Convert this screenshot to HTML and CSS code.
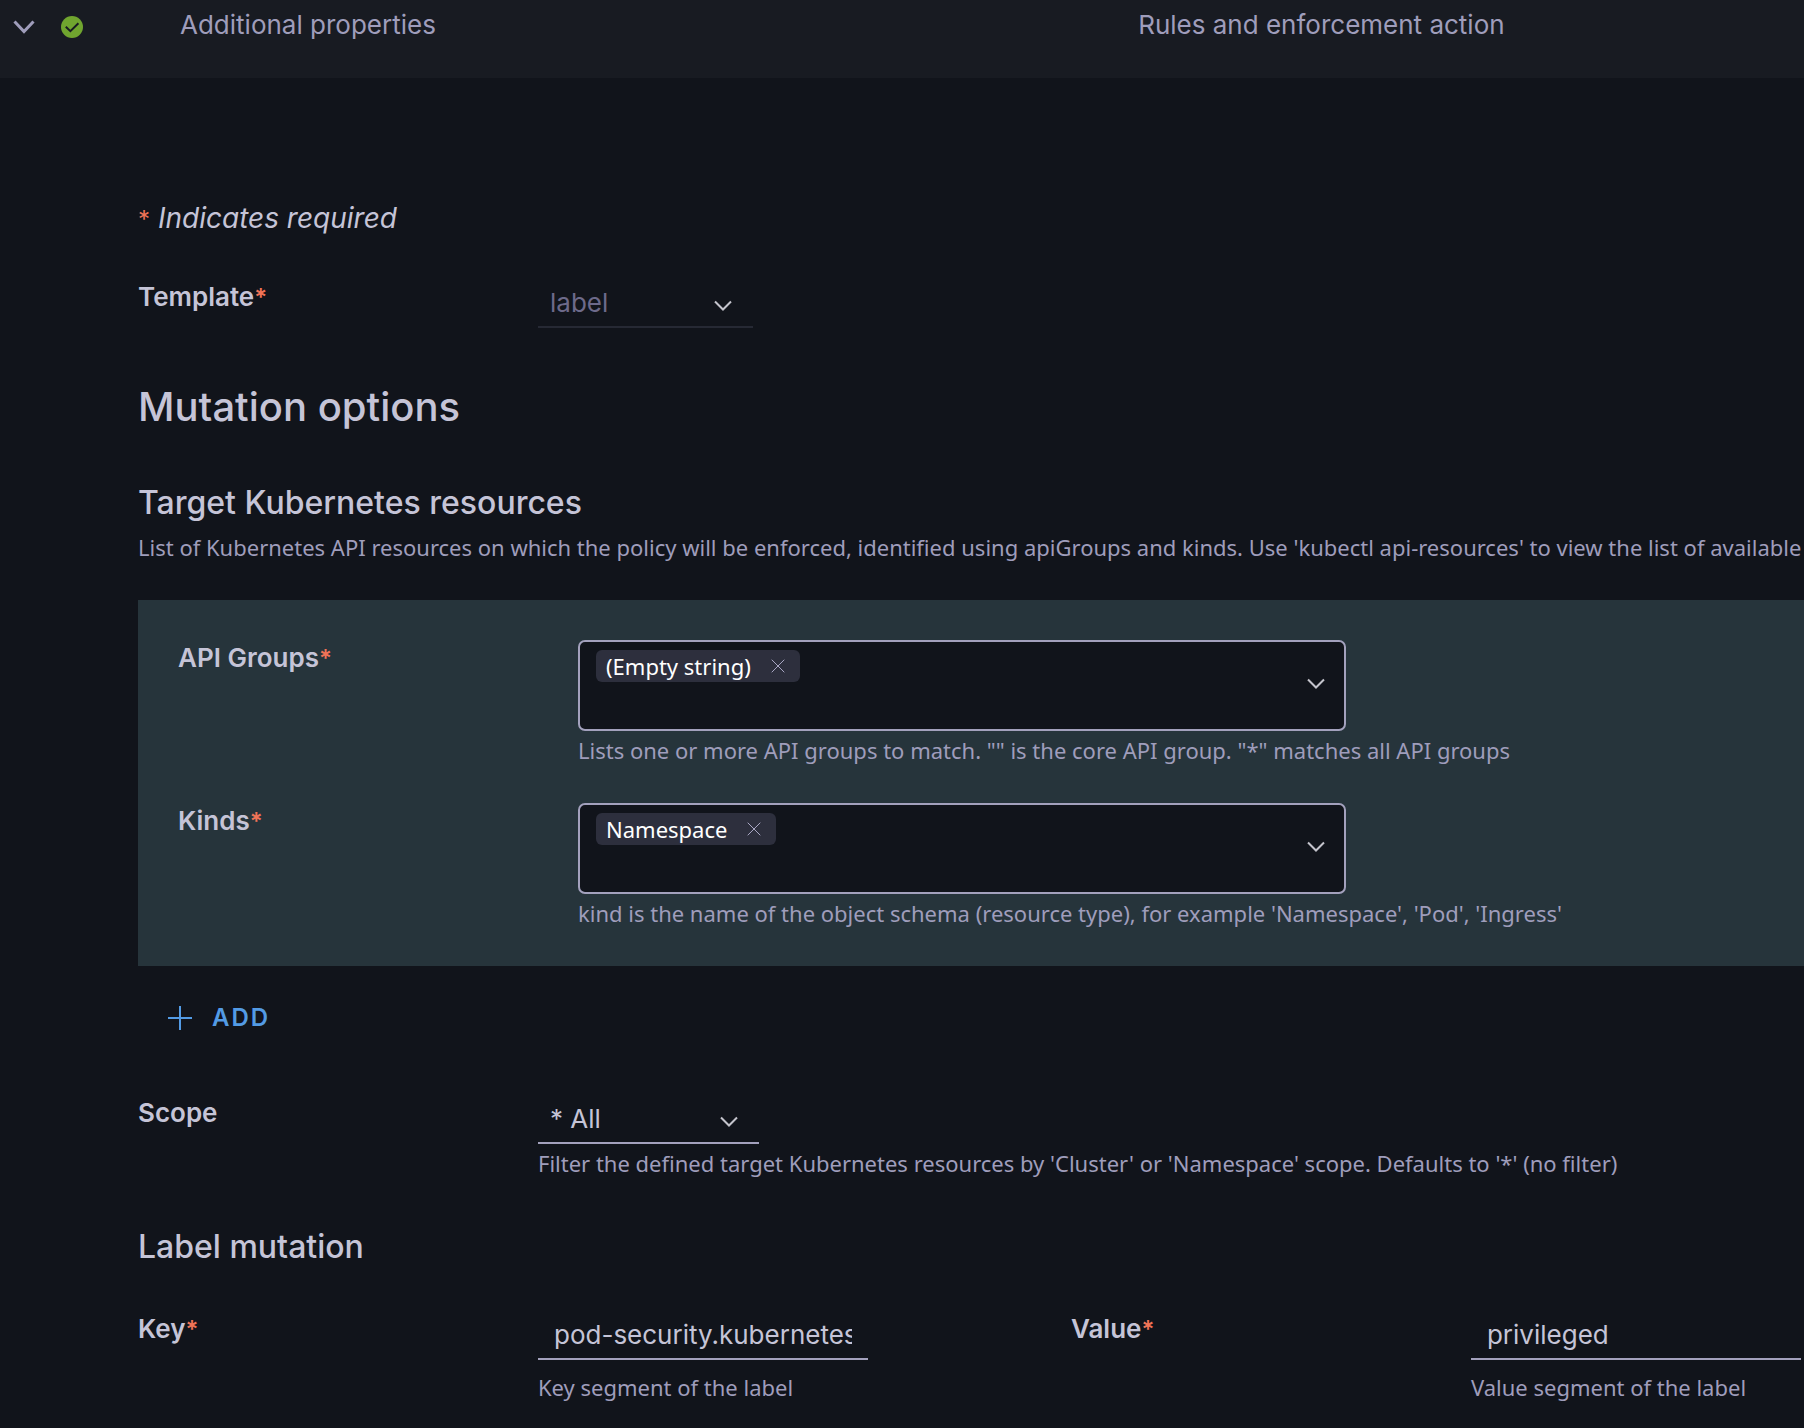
FILE: index.html
```html
<!DOCTYPE html>
<html lang="en">
<head>
<meta charset="utf-8">
<meta name="viewport" content="width=device-width, initial-scale=1">
<title>Additional properties</title>
<link rel="stylesheet" href="styles.css">
</head>
<body>
<header class="step-header">
  <div class="step-icons">
    <button class="icon-button" type="button" aria-label="Collapse step" aria-expanded="true">
      <svg class="step-chevron" viewBox="0 0 24 16" aria-hidden="true"><path d="M2.5 2.5 12 12.500 21.500 2.500"/></svg>
    </button>
    <svg class="step-status" viewBox="0 0 22 22" role="img" aria-label="Complete"><circle cx="11" cy="11" r="11"/><path d="M4.800 10.800 9.400 15.200 17.400 7.300"/></svg>
  </div>
  <div class="step-title">Additional properties</div>
  <div class="step-title">Rules and enforcement action</div>
</header>

<main class="step-content">
  <p class="required-note"><span class="required">*</span> <em>Indicates required</em></p>

  <div class="form-row template-row">
    <label class="field-label" for="template">Template<span class="required">*</span></label>
    <div class="field-control">
      <div class="select select-disabled">
        <select id="template" disabled><option>label</option></select>
        <svg class="chevron" viewBox="0 0 18 12" aria-hidden="true"><path d="M1 1.500 9 9.500 17 1.500"/></svg>
      </div>
    </div>
  </div>

  <h1 class="section-title">Mutation options</h1>

  <h2 class="sub-title target-title">Target Kubernetes resources</h2>
  <p class="description">List of Kubernetes API resources on which the policy will be enforced, identified using apiGroups and kinds. Use 'kubectl api-resources' to view the list of available</p>

  <section class="resource-panel">
    <div class="form-row">
      <label class="field-label" for="api-groups">API Groups<span class="required">*</span></label>
      <div class="panel-control">
        <div class="combobox">
          <span class="tag">(Empty string)
            <button class="icon-button" type="button" aria-label="Remove (Empty string)"><svg class="tag-close" viewBox="0 0 14 14" aria-hidden="true"><path d="M.7.7 13.300 13.300M13.300.7.7 13.300"/></svg></button>
          </span>
          <input class="combobox-input" id="api-groups" type="text">
          <button class="icon-button combobox-toggle" type="button" aria-label="Show API groups"><svg class="chevron" viewBox="0 0 18 12" aria-hidden="true"><path d="M1 1.500 9 9.500 17 1.500"/></svg></button>
        </div>
        <p class="hint">Lists one or more API groups to match. "" is the core API group. "*" matches all API groups</p>
      </div>
    </div>
    <div class="form-row">
      <label class="field-label" for="kinds">Kinds<span class="required">*</span></label>
      <div class="panel-control">
        <div class="combobox">
          <span class="tag">Namespace
            <button class="icon-button" type="button" aria-label="Remove Namespace"><svg class="tag-close" viewBox="0 0 14 14" aria-hidden="true"><path d="M.7.7 13.300 13.300M13.300.7.7 13.300"/></svg></button>
          </span>
          <input class="combobox-input" id="kinds" type="text">
          <button class="icon-button combobox-toggle" type="button" aria-label="Show kinds"><svg class="chevron" viewBox="0 0 18 12" aria-hidden="true"><path d="M1 1.500 9 9.500 17 1.500"/></svg></button>
        </div>
        <p class="hint">kind is the name of the object schema (resource type), for example 'Namespace', 'Pod', 'Ingress'</p>
      </div>
    </div>
  </section>

  <button class="add-button" type="button">
    <svg class="add-icon" viewBox="0 0 24 24" aria-hidden="true"><path d="M12 0V24M0 12H24"/></svg>
    ADD
  </button>

  <div class="form-row scope-row">
    <label class="field-label" for="scope">Scope</label>
    <div class="field-control">
      <div class="select">
        <select id="scope"><option>* All</option><option>Cluster</option><option>Namespace</option></select>
        <svg class="chevron" viewBox="0 0 18 12" aria-hidden="true"><path d="M1 1.500 9 9.500 17 1.500"/></svg>
      </div>
      <p class="hint">Filter the defined target Kubernetes resources by 'Cluster' or 'Namespace' scope. Defaults to '*' (no filter)</p>
    </div>
  </div>

  <h2 class="sub-title label-title">Label mutation</h2>

  <div class="label-fields">
    <div class="form-row">
      <label class="field-label" for="key">Key<span class="required">*</span></label>
      <div class="field-control text-field">
        <div class="text-box"><input class="text-input" id="key" type="text" value="pod-security.kubernetes.io/enforce"></div>
        <p class="hint">Key segment of the label</p>
      </div>
    </div>
    <div class="form-row">
      <label class="field-label" for="value">Value<span class="required">*</span></label>
      <div class="field-control text-field">
        <div class="text-box"><input class="text-input" id="value" type="text" value="privileged"></div>
        <p class="hint">Value segment of the label</p>
      </div>
    </div>
  </div>
</main>
</body>
</html>
```
FILE: styles.css
```css
:root {
  --page: #11141b;
  --header: #181b22;
  --panel: #26343b;
  --text: #c5c4d7;
  --muted: #9f9dbb;
  --line: #a3a1bd;
  --required: #f07357;
  --action: #539be5;
}

* {
  box-sizing: border-box;
}

body {
  margin: 0;
  overflow-x: hidden;
  background: var(--page);
  color: var(--text);
  font: 26px/36px Inter, "Noto Sans", sans-serif;
}

h1, h2, p {
  margin: 0;
  font-weight: 500;
}

button, input, select {
  margin: 0;
  padding: 0;
  border: 0;
  background: none;
  color: inherit;
  font: inherit;
}

svg {
  display: block;
  flex: none;
  fill: none;
  stroke: currentColor;
}

.icon-button {
  display: block;
  cursor: pointer;
}

/* Step header */
.step-header {
  display: grid;
  grid-template-columns: 180px 59fr 41fr;
  padding: 7px 0 35px;
  background: var(--header);
  color: var(--muted);
}

.step-icons {
  display: flex;
  align-items: center;
  gap: 25px;
  padding: 3px 0 0 12px;
}

.step-chevron {
  width: 24px;
  height: 16px;
  stroke-width: 3;
}

.step-status {
  width: 22px;
  height: 22px;
  color: var(--header);
  stroke-width: 2;
}

.step-status circle {
  fill: #70a52f;
  stroke: none;
}

/* Form */
.step-content {
  padding: 120px 0 25px 138px;
}

.required {
  color: var(--required);
  font-size: 24px;
  line-height: 24px;
}

.required-note {
  font-size: 28px;
  line-height: 40px;
  font-weight: 400;
}

.form-row {
  display: grid;
  grid-template-columns: 400px minmax(0, 1fr);
}

.field-label {
  font-weight: 600;
}

.field-control {
  padding-top: 6px;
}

.template-row {
  margin-top: 41px;
}

.select {
  display: inline-grid;
  grid-template-columns: 1fr 39px;
  align-items: center;
  width: 221px;
  height: 43px;
  border-bottom: 2px solid var(--line);
  vertical-align: top;
}

.select select {
  grid-area: 1 / 1 / 2 / 3;
  height: 41px;
  padding: 0 40px 5px 12px;
  appearance: none;
}

.select .chevron {
  grid-area: 1 / 2;
  pointer-events: none;
}

.select-disabled {
  width: 215px;
  border-color: #262934;
}

.select-disabled select {
  color: #6d6a8a;
  opacity: 1;
}

.chevron {
  width: 18px;
  height: 12px;
  stroke: #c4c4cc;
  stroke-width: 2;
}

.section-title {
  margin-top: 55px;
  font-size: 40px;
  line-height: 48px;
}

.sub-title {
  font-size: 32px;
  line-height: 40px;
}

.target-title {
  margin-top: 52px;
}

.description, .hint {
  color: var(--muted);
  font: 22px/32px "Noto Sans", sans-serif;
}

.description {
  margin-top: 8px;
  overflow: hidden;
  white-space: nowrap;
}

.hint {
  margin-top: 3px;
}

/* Target resources */
.resource-panel {
  display: grid;
  gap: 37px;
  margin-top: 37px;
  padding: 40px 40px 37px;
  background: var(--panel);
}

.combobox {
  display: flex;
  align-items: flex-start;
  gap: 12px;
  width: 100%;
  max-width: 768px;
  height: 91px;
  padding: 8px 19px 11px 16px;
  border: 2px solid var(--line);
  border-radius: 7px;
  background: var(--page);
}

.combobox-input {
  flex: 1;
  min-width: 0;
  outline: none;
}

.combobox-toggle {
  align-self: center;
}

.tag {
  display: flex;
  align-items: center;
  gap: 20px;
  padding: 0 15px 0 10px;
  border-radius: 6px;
  background: #2d2f3d;
  color: #fff;
  font: 22px/32px "Noto Sans", sans-serif;
}

.tag-close {
  width: 14px;
  height: 14px;
  color: #a9a7c4;
}

.add-button {
  display: flex;
  align-items: center;
  gap: 20px;
  margin: 36px 0 0 30px;
  color: var(--action);
  font-size: 24px;
  line-height: 32px;
  font-weight: 600;
  letter-spacing: 2px;
  cursor: pointer;
}

.add-icon {
  width: 24px;
  height: 24px;
  stroke-width: 2;
}

.scope-row {
  margin-top: 61px;
}

/* Label mutation */
.label-title {
  margin-top: 48px;
}

.label-fields {
  display: grid;
  grid-template-columns: 56fr 44fr;
  margin-top: 44px;
}

.text-box {
  max-width: 330px;
  height: 43px;
  padding: 0 16px;
  border-bottom: 2px solid var(--line);
}

.text-input {
  display: block;
  width: 100%;
  height: 36px;
  outline: none;
}

.text-field .hint {
  margin-top: 11px;
}
```
